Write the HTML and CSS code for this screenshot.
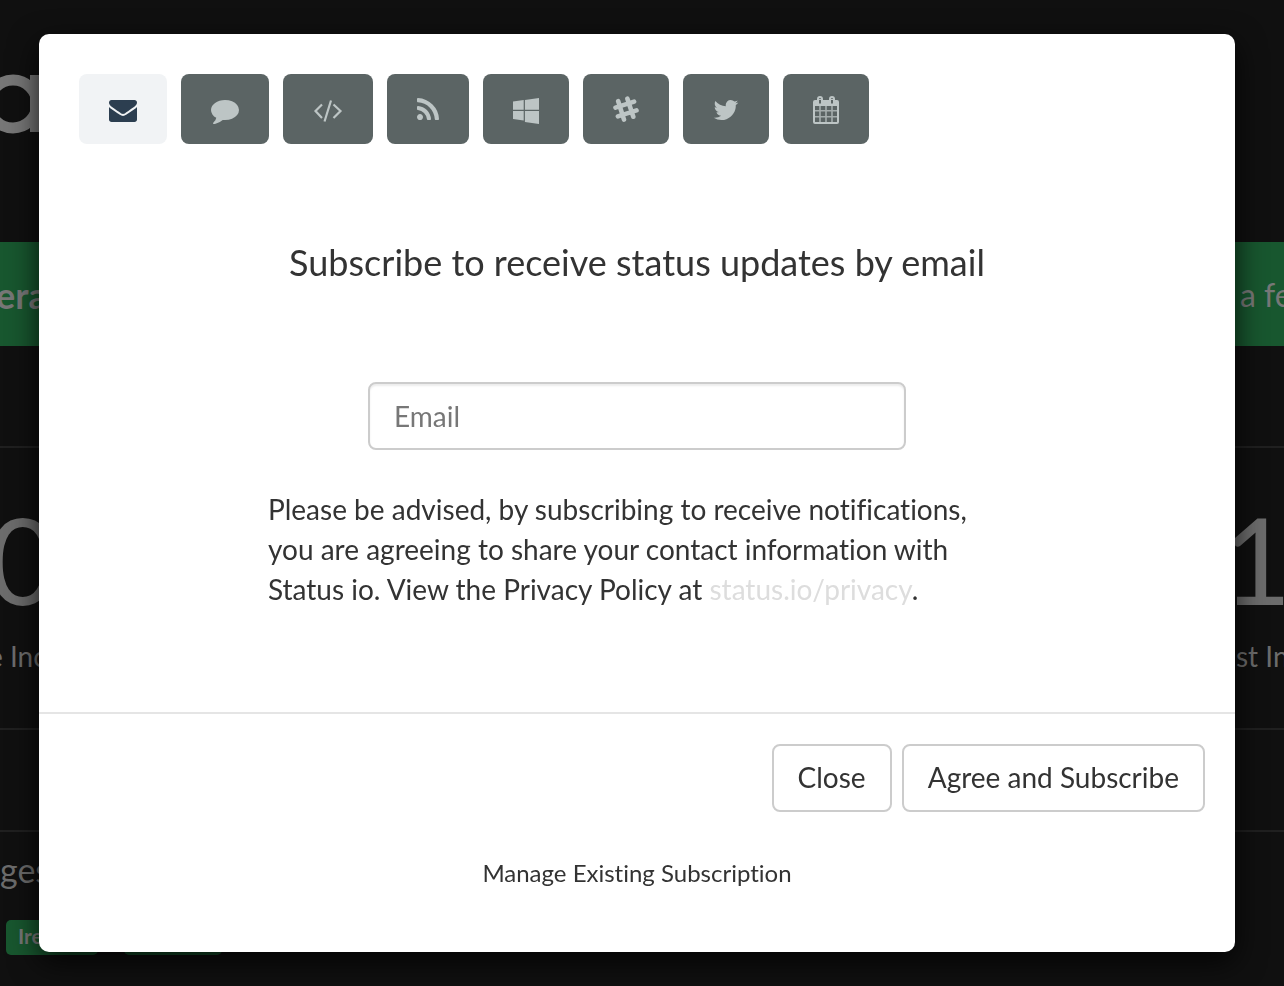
FILE: index.html
```html
<!DOCTYPE html>
<html lang="en">
<head>
<meta charset="utf-8">
<meta name="viewport" content="width=device-width, initial-scale=1">
<title>Subscribe to status updates</title>
<link rel="stylesheet" href="styles.css">
</head>
<body>
<div class="page">
  <header class="page-header">
    <svg class="brand" width="52" height="60" viewBox="0 0 52 60" aria-hidden="true">
      <circle cx="23" cy="30" r="24" fill="none" stroke="currentColor" stroke-width="11"/>
      <rect x="40" y="1" width="11" height="57" fill="currentColor"/>
    </svg>
  </header>
  <section class="banner">
    <strong class="banner-title">era</strong>
    <span class="banner-time">a fe</span>
  </section>
  <section class="stats">
    <div class="stat"><span class="stat-value">0</span><span class="stat-label">e Inc</span></div>
    <div class="stat"><span class="stat-value">1</span><span class="stat-label">ast In</span></div>
  </section>
  <section class="regions">
    <h2 class="regions-title">ges</h2>
    <div class="chips"><span class="chip">Ire</span><span class="chip"></span></div>
  </section>
</div>

<div class="overlay">
  <div class="dialog" role="dialog" aria-modal="true" aria-labelledby="dialog-title">
    <form class="form">
      <div class="dialog-body">
        <nav class="tabs">
          <button class="tab tab-active" type="button" aria-label="Email">
            <svg width="28" height="28" viewBox="0 0 1792 1792"><path d="M1792 710v794q0 66-47 113t-113 47h-1472q-66 0-113-47t-47-113v-794q44 49 101 87 362 246 497 345 57 42 92.500 65.500t94.500 48 110 24.500h2q51 0 110-24.500t94.500-48 92.500-65.500q170-123 498-345 57-39 100-87zm0-294q0 79-49 151t-122 123q-376 261-468 325-10 7-42.500 31t-54 38.800-52 31.500-57.500 27-50 9h-2q-23 0-50-9t-57.500-27-52-31.500-54-38.800-42.500-31q-91-64-262-182.500t-205-142.500q-62-42-117-115.500t-55-136.500q0-78 41.500-130t118.500-52h1472q65 0 112.500 47t47.500 113z"/></svg>
          </button>
          <button class="tab" type="button" aria-label="SMS">
            <svg width="28" height="28" viewBox="0 0 1792 1792"><path d="M1792 896q0 174-120 321.500t-326 233-450 85.500q-70 0-145-8-198 175-460 242-49 14-114 22-17 2-30.500-9t-17.500-29v-1q-3-4-.5-12t2-10 4.500-9.500l6-9 7-8.500 8-9q7-8 31-34.500t34.500-38 31-39.500 32.500-51 27-59 26-76q-157-89-247.500-220t-90.500-281q0-130 71-248.500t191-204.500 286-136.500 348-50.500q244 0 450 85.500t326 233 120 321.500z"/></svg>
          </button>
          <button class="tab" type="button" aria-label="Webhook">
            <svg width="30" height="28" viewBox="0 0 30 28"><path d="M9 8.500 2.500 15 9 22M20.500 8.500 27.500 15l-7 7M18 4.500 11.500 25.500" fill="none" stroke="currentColor" stroke-width="2.200"/></svg>
          </button>
          <button class="tab" type="button" aria-label="RSS feed">
            <svg width="22" height="28" viewBox="192 0 1408 1792"><path d="M576 1344q0 80-56 136t-136 56-136-56-56-136 56-136 136-56 136 56 56 136zm512 123q2 28-17 48-18 21-47 21h-135q-25 0-43-16.500t-20-41.500q-22-229-184.500-391.500t-391.500-184.500q-25-2-41.500-20t-16.500-43v-135q0-29 21-47 17-17 43-17h5q160 13 306 80.500t259 181.500q114 113 181.500 259t80.500 306zm512 2q2 27-18 47-18 20-46 20h-143q-26 0-44.500-17.500t-19.500-42.500q-12-215-101-408.500t-231.500-336-336-231.500-408.500-102q-25-1-42.500-19.500t-17.500-43.500v-143q0-28 20-46 18-18 44-18h3q262 13 501.500 120t425.500 294q187 186 294 425.500t120 501.500z"/></svg>
          </button>
          <button class="tab" type="button" aria-label="Microsoft Teams">
            <svg width="26" height="28" viewBox="0 0 26 28"><path d="M0 5.600 10.700 4.100v9.700H0zM11.900 3.900 26 2v11.800H11.900zM0 15h10.700v9.500L0 23zM11.900 15H26v13l-14.100-2z"/></svg>
          </button>
          <button class="tab" type="button" aria-label="Slack">
            <svg width="26" height="28" viewBox="0 0 26 28"><path d="M5.200 5.200 11 23.600M14.400 2.700l5.900 18M2.500 11.600l18.600-6M4.900 20.400l18.600-6" fill="none" stroke="currentColor" stroke-width="4.600" stroke-linecap="round"/></svg>
          </button>
          <button class="tab" type="button" aria-label="Twitter">
            <svg width="26" height="28" viewBox="64 0 1664 1792"><path d="M1684 408q-67 98-162 167 1 14 1 42 0 130-38 259.500t-115.500 248.500-184.500 210.500-258 146-323 54.500q-271 0-496-145 35 4 78 4 225 0 401-138-105-2-188-64.500t-114-159.500q33 5 61 5 43 0 85-11-112-23-185.500-111.500t-73.500-205.500v-4q68 38 146 41-66-44-105-115t-39-154q0-88 44-163 121 149 294.500 238.500t371.500 99.500q-8-38-8-74 0-134 94.500-228.500t228.500-94.500q140 0 236 102 109-21 205-78-37 115-142 178 93-10 186-50z"/></svg>
          </button>
          <button class="tab" type="button" aria-label="Calendar">
            <svg width="26" height="28" viewBox="0 0 26 28">
              <path fill-rule="evenodd" d="M2 4h22a2 2 0 0 1 2 2v20a2 2 0 0 1-2 2H2a2 2 0 0 1-2-2V6a2 2 0 0 1 2-2zM2 10v16h22V10zM6 3v4.500h2V3zM18 3v4.500h2V3z"/>
              <path d="M7 10v16M13 10v16M19 10v16M2 14.800h22M2 20.800h22" fill="none" stroke="currentColor" stroke-width="1.600" opacity=".75"/>
              <path d="M5 6V3a2 2 0 0 1 4 0v3M17 6V3a2 2 0 0 1 4 0v3" fill="none" stroke="currentColor" stroke-width="2"/>
            </svg>
          </button>
        </nav>
        <h1 class="title" id="dialog-title">Subscribe to receive status updates by email</h1>
        <input class="email" type="email" placeholder="Email" aria-label="Email">
        <p class="notice">Please be advised, by subscribing to receive notifications, you are agreeing to share your contact information with Status io. View the Privacy Policy at <a class="notice-link" href="#privacy">status.io/privacy</a>.</p>
      </div>
      <footer class="dialog-footer">
        <div class="actions">
          <button class="action" type="button">Close</button>
          <button class="action" type="submit">Agree and Subscribe</button>
        </div>
        <a class="manage" href="#manage">Manage Existing Subscription</a>
      </footer>
    </form>
  </div>
</div>
</body>
</html>
```
FILE: styles.css
```css
* {
  box-sizing: border-box;
}

body {
  margin: 0;
  background: #101010;
  color: #333;
  font-family: Lato, sans-serif;
  font-size: 28px;
  font-variant-ligatures: none;
  line-height: 40px;
  overflow: hidden;
}

/* Status page, dimmed behind the dialog */
.page {
  height: 100vh;
  overflow: hidden;
  color: #6c6c6c;
  white-space: nowrap;
}

.page-header {
  height: 242px;
  padding-top: 74px;
}

.brand {
  display: block;
  margin-left: -10px;
  color: #777;
}

.banner {
  display: flex;
  align-items: center;
  justify-content: space-between;
  height: 104px;
  margin-left: -4px;
  padding-top: 2px;
  background: #18572f;
  color: #777;
}

.banner-title {
  font-size: 36px;
}

.banner-time {
  width: 44px;
  font-size: 32px;
}

.stats {
  display: flex;
  justify-content: space-between;
  height: 284px;
  margin-top: 100px;
  padding-top: 34px;
  border-top: 2px solid #202020;
  border-bottom: 2px solid #202020;
}

.stat {
  display: flex;
  flex-direction: column;
  width: 62px;
  margin-left: -12px;
}

.stat-value {
  font-size: 120px;
  line-height: 154px;
}

.stat-label {
  font-size: 28px;
}

.regions {
  margin-top: 100px;
  padding-top: 18px;
  border-top: 2px solid #202020;
}

.regions-title {
  margin: 0;
  font-size: 34px;
  font-weight: 400;
}

.chips {
  display: flex;
  gap: 26px;
  padding: 30px 6px;
}

.chip {
  width: 92px;
  height: 35px;
  padding-left: 12px;
  border-radius: 5px;
  background: #18572f;
  color: #777;
  font-size: 21px;
  font-weight: 700;
  line-height: 32px;
}

.chip:last-child {
  width: 98px;
}

/* Dialog */
.overlay {
  position: fixed;
  inset: 0;
  padding: 34px 49px 34px 39px;
}

.dialog {
  border-radius: 10px;
  background: #fff;
  box-shadow: 0 10px 30px rgba(0, 0, 0, 0.8);
}

.form {
  margin: 0;
}

.dialog-body {
  display: flex;
  flex-direction: column;
  align-items: center;
  padding: 40px 40px 103px;
}

.tabs {
  display: flex;
  flex-wrap: wrap;
  align-self: stretch;
  gap: 14px;
}

.tab {
  padding: 22px 30px 20px;
  border: 0;
  border-radius: 8px;
  background: #5b6464;
  color: #bdc5c5;
}

.tab svg {
  display: block;
  fill: currentColor;
}

.tab-active {
  background: #f1f3f5;
  color: #2c3e50;
}

.title {
  margin: 98px 0 100px;
  font-size: 36px;
  font-weight: 400;
  line-height: 40px;
  text-align: center;
}

.email {
  width: 100%;
  max-width: 538px;
  height: 68px;
  padding: 0 24px;
  border: 2px solid #ccc;
  border-radius: 8px;
  box-shadow: inset 0 2px 2px rgba(0, 0, 0, 0.08);
  background: #fff;
  color: #333;
  font: inherit;
}

.email::placeholder {
  color: #777;
}

.notice {
  width: 100%;
  max-width: 738px;
  margin: 39px 0 0;
}

.notice-link {
  color: #ddd;
  text-decoration: none;
}

.dialog-footer {
  display: flex;
  flex-direction: column;
  align-items: center;
  padding: 30px 30px 59px;
  border-top: 2px solid #e5e5e5;
}

.actions {
  display: flex;
  align-self: stretch;
  justify-content: flex-end;
  gap: 10px;
}

.action {
  height: 68px;
  padding: 0 24px 2px;
  border: 2px solid #ccc;
  border-radius: 8px;
  background: #fff;
  color: #333;
  font: inherit;
}

.manage {
  margin-top: 41px;
  color: #333;
  font-size: 24px;
  text-decoration: none;
}
```
